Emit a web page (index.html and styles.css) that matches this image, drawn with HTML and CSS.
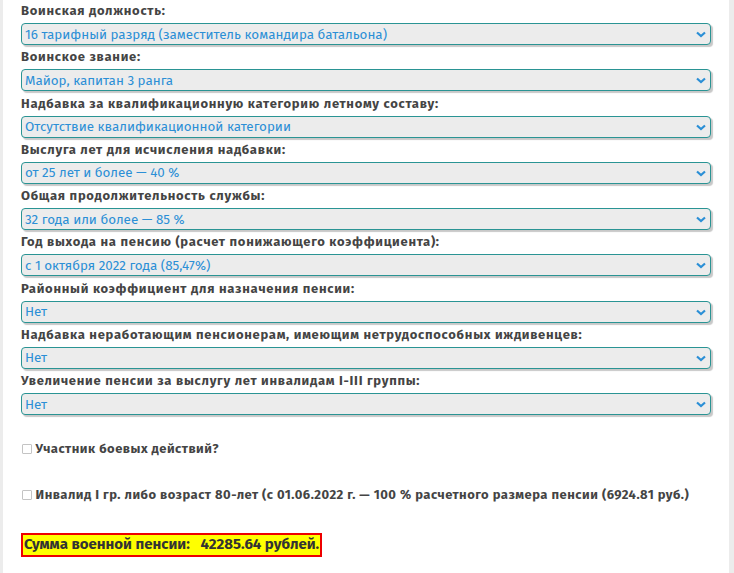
FILE: index.html
```html
<!DOCTYPE html>
<html lang="ru">
<head>
    <meta charset="UTF-8">
    <meta name="viewport" content="width=device-width, initial-scale=1.0">
    <title>Калькулятор военной пенсии</title>
    <link rel="stylesheet" href="styles.css">
</head>
<body>
    <div class="page">
        <form class="calc" onsubmit="event.preventDefault();">
            <div class="field">
                <label for="post">Воинская должность:</label>
                <div class="select-wrap">
                    <select id="post" class="form-select"><option>16 тарифный разряд (заместитель командира батальона)</option></select>
                    <svg class="chev" width="10" height="7" viewBox="0 0 10 7"><path d="M1 1.5 L5 5 L9 1.5" fill="none" stroke="#2b8fd6" stroke-width="2.2"/></svg>
                </div>
            </div>
            <div class="field">
                <label for="rank">Воинское звание:</label>
                <div class="select-wrap">
                    <select id="rank" class="form-select"><option>Майор, капитан 3 ранга</option></select>
                    <svg class="chev" width="10" height="7" viewBox="0 0 10 7"><path d="M1 1.5 L5 5 L9 1.5" fill="none" stroke="#2b8fd6" stroke-width="2.2"/></svg>
                </div>
            </div>
            <div class="field">
                <label for="qual">Надбавка за квалификационную категорию летному составу:</label>
                <div class="select-wrap">
                    <select id="qual" class="form-select"><option>Отсутствие квалификационной категории</option></select>
                    <svg class="chev" width="10" height="7" viewBox="0 0 10 7"><path d="M1 1.5 L5 5 L9 1.5" fill="none" stroke="#2b8fd6" stroke-width="2.2"/></svg>
                </div>
            </div>
            <div class="field">
                <label for="years">Выслуга лет для исчисления надбавки:</label>
                <div class="select-wrap">
                    <select id="years" class="form-select"><option>от 25 лет и более — 40 %</option></select>
                    <svg class="chev" width="10" height="7" viewBox="0 0 10 7"><path d="M1 1.5 L5 5 L9 1.5" fill="none" stroke="#2b8fd6" stroke-width="2.2"/></svg>
                </div>
            </div>
            <div class="field">
                <label for="total">Общая продолжительность службы:</label>
                <div class="select-wrap">
                    <select id="total" class="form-select"><option>32 года или более — 85 %</option></select>
                    <svg class="chev" width="10" height="7" viewBox="0 0 10 7"><path d="M1 1.5 L5 5 L9 1.5" fill="none" stroke="#2b8fd6" stroke-width="2.2"/></svg>
                </div>
            </div>
            <div class="field">
                <label for="year">Год выхода на пенсию (расчет понижающего коэффициента):</label>
                <div class="select-wrap">
                    <select id="year" class="form-select"><option>с 1 октября 2022 года (85,47%)</option></select>
                    <svg class="chev" width="10" height="7" viewBox="0 0 10 7"><path d="M1 1.5 L5 5 L9 1.5" fill="none" stroke="#2b8fd6" stroke-width="2.2"/></svg>
                </div>
            </div>
            <div class="field">
                <label for="region">Районный коэффициент для назначения пенсии:</label>
                <div class="select-wrap">
                    <select id="region" class="form-select"><option>Нет</option></select>
                    <svg class="chev" width="10" height="7" viewBox="0 0 10 7"><path d="M1 1.5 L5 5 L9 1.5" fill="none" stroke="#2b8fd6" stroke-width="2.2"/></svg>
                </div>
            </div>
            <div class="field">
                <label for="deps">Надбавка неработающим пенсионерам, имеющим нетрудоспособных иждивенцев:</label>
                <div class="select-wrap">
                    <select id="deps" class="form-select"><option>Нет</option></select>
                    <svg class="chev" width="10" height="7" viewBox="0 0 10 7"><path d="M1 1.5 L5 5 L9 1.5" fill="none" stroke="#2b8fd6" stroke-width="2.2"/></svg>
                </div>
            </div>
            <div class="field">
                <label for="inv">Увеличение пенсии за выслугу лет инвалидам I-III группы:</label>
                <div class="select-wrap">
                    <select id="inv" class="form-select"><option>Нет</option></select>
                    <svg class="chev" width="10" height="7" viewBox="0 0 10 7"><path d="M1 1.5 L5 5 L9 1.5" fill="none" stroke="#2b8fd6" stroke-width="2.2"/></svg>
                </div>
            </div>

            <label class="check check-first"><input type="checkbox"> Участник боевых действий?</label>
            <label class="check check-second"><input type="checkbox"> Инвалид I гр. либо возраст 80-лет (с 01.06.2022 г. — 100 % расчетного размера пенсии (6924.81 руб.)</label>

            <div class="result"><span class="sum">Сумма военной пенсии: &nbsp; 42285.64 рублей.</span></div>
        </form>
    </div>
</body>
</html>
```
FILE: styles.css
```css
html, body {
    margin: 0;
    padding: 0;
    background: #ececec;
}
body {
    font-family: "Fira Sans", "Noto Sans", "Open Sans", sans-serif;
    color: #444;
}
.page {
    margin: 0 5px 0 3px;
    background: #fff;
    min-height: 573px;
    padding: 2px 18px 0 18px;
}
.field {
    margin-bottom: 3.25px;
}
.field label {
    display: block;
    font-size: 13px;
    font-weight: bold;
    letter-spacing: 0.72px;
    line-height: 18px;
    margin-bottom: 3px;
    color: #444;
}
.select-wrap {
    position: relative;
    width: 690px;
}
.form-select {
    display: block;
    width: 100%;
    height: 22px;
    padding: 0 3px;
    font-family: inherit;
    font-size: 13.4px;
    color: #2b8fd6;
    background: #ececec;
    border: 1px solid #2a9494;
    border-radius: 4px;
    box-shadow: 2px 2px 1px #c8c8c8;
    appearance: none;
    -webkit-appearance: none;
    outline: none;
}
.chev {
    position: absolute;
    right: 5px;
    top: 8px;
    pointer-events: none;
}
.check {
    display: block;
    font-size: 13px;
    font-weight: bold;
    letter-spacing: 0.48px;
    color: #444;
    line-height: 18px;
}
.check input {
    appearance: none;
    -webkit-appearance: none;
    width: 10px;
    height: 10px;
    margin: 0 0 0 1px;
    vertical-align: -1px;
    border: 1px solid #c4c4c4;
    border-radius: 1px;
    background: #fff;
}
.check-first {
    margin-top: 25px;
}
.check-second {
    margin-top: 28px;
}
.result {
    margin-top: 29px;
}
.sum {
    display: inline-block;
    background: #ffff00;
    border: 2px solid #ee0000;
    padding: 1px 1px 2px 1px;
    font-size: 15px;
    font-weight: bold;
    color: #333;
    line-height: 17px;
}
```
